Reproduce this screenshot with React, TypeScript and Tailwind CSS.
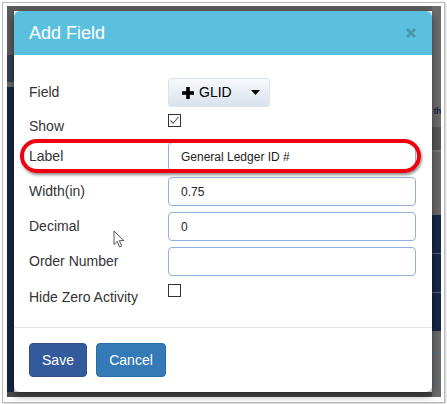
const font = "font-['Liberation_Sans',Arial,sans-serif]";

function LeftStrip() {
  return (
    <div className="flex w-[7px] shrink-0 flex-col">
      <div className="h-[49px] bg-[#5b5b5b]" />
      <div className="h-[27px] bg-[#34414f]" />
      <div className="h-[5px] bg-[#6a6a6a]" />
      <div className="h-[305px] bg-[#172745]" />
      <div className="flex-1 bg-[#4b4b4b]" />
    </div>
  );
}

function RightStrip() {
  return (
    <div className="flex w-[9px] shrink-0 flex-col">
      <div className="h-[121px] overflow-hidden bg-[#6c6c6c] pt-[98px]">
        <div className="flex justify-end text-[9px] font-bold leading-[14px] tracking-[-0.5px] whitespace-nowrap text-[#1a2a4c]">
          th
        </div>
      </div>
      <div className="h-[23px] bg-[#575757]" />
      <div className="h-[65px] border-t-2 border-[#7a7a7a] bg-[#696969]" />
      <div className="flex h-[116px] flex-col bg-[#182848]">
        <div className="h-[38px]" />
        <div className="h-[1px] bg-[#5a6580]" />
        <div className="h-[38px]" />
        <div className="h-[1px] bg-[#5a6580]" />
      </div>
      <div className="flex flex-1 flex-col bg-[#6b6b6b]">
        <div className="h-[21px]" />
        <div className="h-[1px] bg-[#5b6a85]" />
        <div className="h-[28px]" />
        <div className="h-[1px] bg-[#5b6a85]" />
      </div>
    </div>
  );
}

function Checkbox({ checked }: { checked?: boolean }) {
  return (
    <div className="flex h-[13px] w-[13px] items-center justify-center border border-[#333] bg-white">
      {checked && (
        <svg width="11" height="11" viewBox="0 0 11 11">
          <polyline points="1.5,5.5 4.2,8.3 9.5,2" fill="none" stroke="#555" strokeWidth="1.1" />
        </svg>
      )}
    </div>
  );
}

function TextInput({ value }: { value?: string }) {
  return (
    <div className="flex h-[29px] w-[249px] items-center rounded-[4px] border border-[#8eb0dc] bg-white pl-[12px] text-[12px] text-[#222]">
      {value}
    </div>
  );
}

function Row({
  label,
  height,
  top,
  children,
}: {
  label: string;
  height: string;
  top?: string;
  children: React.ReactNode;
}) {
  return (
    <div className={`flex ${height} ${top ?? ""}`}>
      <div className="flex w-[139px] shrink-0 items-center text-[14px] text-[#333]">{label}</div>
      {children}
    </div>
  );
}

function GlidButton() {
  return (
    <div className="flex h-[29px] w-[102px] items-center rounded-[3px] border border-[#dde3ea] bg-gradient-to-b from-[#f8f9fb] to-[#d9e2ee] pl-[13px] text-[14px] text-black">
      <svg width="12" height="12" viewBox="0 0 12 12">
        <rect x="4.2" y="0" width="3.6" height="12" fill="#000" />
        <rect x="0" y="4.2" width="12" height="3.6" fill="#000" />
      </svg>
      <span className="ml-[5px]">GLID</span>
      <svg className="ml-[19px]" width="9" height="5" viewBox="0 0 9 5">
        <polygon points="0,0 9,0 4.5,5" fill="#000" />
      </svg>
    </div>
  );
}

function Cursor() {
  return (
    <svg className="absolute left-[99px] top-[175px]" width="13" height="19" viewBox="0 0 13 19">
      <path
        d="M1 1 L1 14.5 L4.2 11.4 L6.6 17 L8.7 16.1 L6.4 10.6 L10.8 10.6 Z"
        fill="#fff"
        stroke="#444"
        strokeWidth="0.9"
        strokeLinejoin="round"
      />
    </svg>
  );
}

function Modal() {
  return (
    <div className="relative flex h-[381px] flex-col overflow-hidden rounded-[6px] bg-white shadow-[0_3px_9px_rgba(0,0,0,0.5)]">
      <div className="flex h-[44px] shrink-0 items-center justify-between bg-[#5bc0de] pl-[15px] pr-[16px]">
        <span className="text-[18px] text-white">Add Field</span>
        <svg width="10" height="10" viewBox="0 0 10 10" className="mt-[-1px]">
          <path d="M1 1 L9 9 M9 1 L1 9" stroke="#4a97b0" strokeWidth="2.8" />
        </svg>
      </div>

      <div className="relative flex flex-col pl-[15px] pr-[16px] pt-[20px] pb-[15px]">
        <Row label="Field" height="h-[35px]">
          <div className="flex items-center">
            <GlidButton />
          </div>
        </Row>
        <Row label="Show" height="h-[32px]">
          <div className="mt-[4px]">
            <Checkbox checked />
          </div>
        </Row>
        <Row label="Label" height="h-[29px]">
          <TextInput value="General Ledger ID #" />
        </Row>
        <Row label="Width(in)" height="h-[29px]" top="mt-[6px]">
          <TextInput value="0.75" />
        </Row>
        <Row label="Decimal" height="h-[29px]" top="mt-[6px]">
          <TextInput value="0" />
        </Row>
        <Row label="Order Number" height="h-[29px]" top="mt-[6px]">
          <TextInput />
        </Row>
        <Row label="Hide Zero Activity" height="h-[30px]" top="mt-[6px]">
          <div className="mt-[2px]">
            <Checkbox />
          </div>
        </Row>

        {/* annotation ring round the Label row */}
        <div className="absolute left-[6px] top-[84px] h-[34px] w-[401px] rounded-full border-4 border-[#f0000c] shadow-[1px_2px_3px_rgba(0,0,0,0.45)]" />
        <Cursor />
      </div>

      <div className="flex gap-[9px] border-t border-[#e5e5e5] pl-[15px] pt-[15px] pb-[15px]">
        <button className="flex h-[34px] w-[58px] items-center justify-center rounded-[4px] border border-[#2e5089] bg-[#345a9e] text-[14px] text-white">
          Save
        </button>
        <button className="flex h-[34px] w-[70px] items-center justify-center rounded-[4px] border border-[#2e6da4] bg-[#337ab7] text-[14px] text-white">
          Cancel
        </button>
      </div>
    </div>
  );
}

export default function App() {
  return (
    <div className={`h-[404px] w-[447px] bg-white pl-[2px] pt-[2px] ${font}`}>
      <div className="h-[401px] w-[443px] border border-[#b9b9b9] bg-white pb-[5px] pl-[4px] pr-[3px] pt-[3px] shadow-[1px_1px_2px_rgba(0,0,0,0.2)]">
        <div className="flex h-[391px] w-[434px]">
          <LeftStrip />
          <div className="flex w-[418px] shrink-0 flex-col">
            <div className="h-[5px] bg-[#5d5d5d]" />
            <Modal />
            <div className="flex-1 bg-[#4a4a4a]" />
          </div>
          <RightStrip />
        </div>
      </div>
    </div>
  );
}
